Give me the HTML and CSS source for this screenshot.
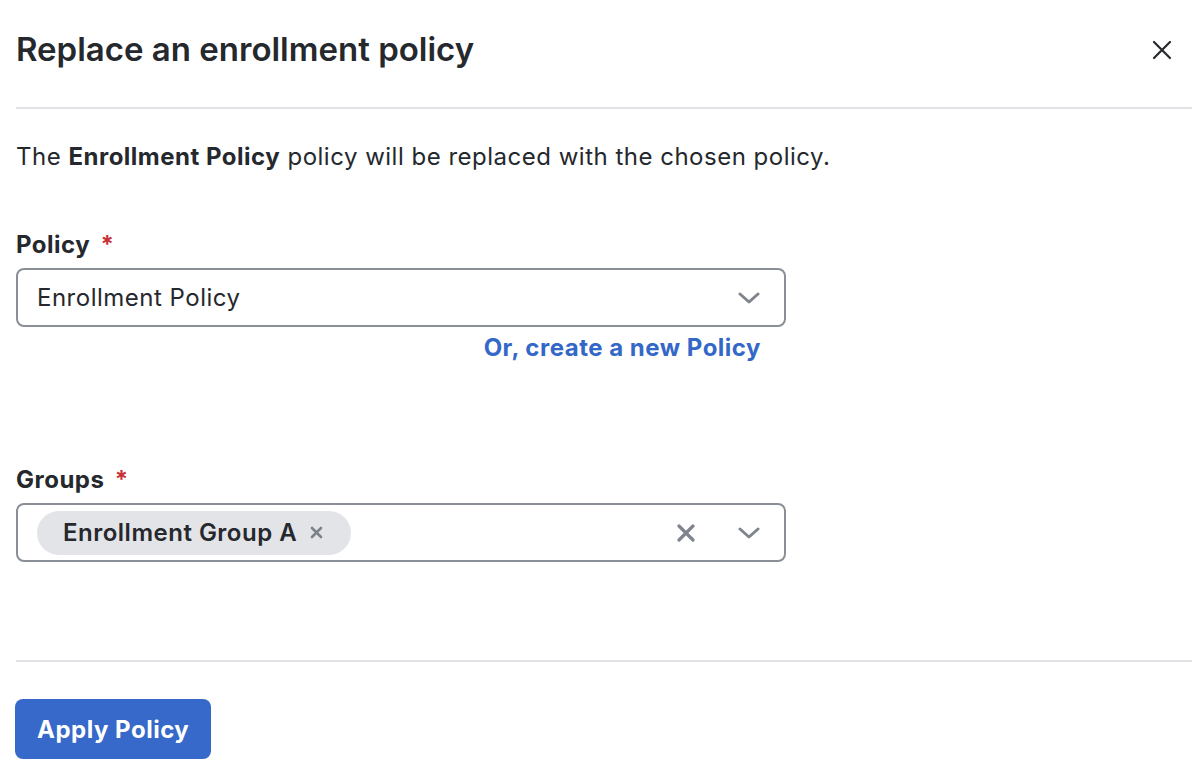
FILE: index.html
```html
<!DOCTYPE html>
<html>
<head>
<meta charset="utf-8">
<link rel="stylesheet" href="styles.css">
</head>
<body>
<div class="dialog">
  <header class="head">
    <h1 class="title">Replace an enrollment policy</h1>
    <button class="close" aria-label="Close">
      <svg width="20" height="20" viewBox="0 0 20 20"><path d="M2 2 L18 18 M18 2 L2 18" stroke="#25282d" stroke-width="2.2" stroke-linecap="round" fill="none"/></svg>
    </button>
  </header>
  <div class="body">
    <p class="intro">The <b>Enrollment Policy</b> policy will be replaced with the chosen policy.</p>
    <div class="field">
      <label class="label">Policy <span class="req">*</span></label>
      <div class="select">
        <span class="value">Enrollment Policy</span>
        <svg class="chev" width="22" height="12" viewBox="0 0 22 12"><path d="M2 2 L11 10 L20 2" stroke="#80858d" stroke-width="3" stroke-linecap="round" stroke-linejoin="round" fill="none"/></svg>
      </div>
      <div class="linkrow"><a class="link">Or, create a new Policy</a></div>
    </div>
    <div class="field groups">
      <label class="label">Groups <span class="req">*</span></label>
      <div class="select multi">
        <span class="chip">Enrollment Group A <svg class="chipx" width="13" height="13" viewBox="0 0 13 13"><path d="M2 2 L11 11 M11 2 L2 11" stroke="#7d8189" stroke-width="2.6" stroke-linecap="round" fill="none"/></svg></span>
        <span class="spacer"></span>
        <svg class="clear" width="18" height="18" viewBox="0 0 18 18"><path d="M2 2 L16 16 M16 2 L2 16" stroke="#80858d" stroke-width="3.2" stroke-linecap="round" fill="none"/></svg>
        <svg class="chev" width="22" height="12" viewBox="0 0 22 12"><path d="M2 2 L11 10 L20 2" stroke="#80858d" stroke-width="3" stroke-linecap="round" stroke-linejoin="round" fill="none"/></svg>
      </div>
    </div>
  </div>
  <footer class="foot">
    <button class="apply">Apply Policy</button>
  </footer>
</div>
</body>
</html>
```
FILE: styles.css
```css
* { box-sizing: border-box; }
html, body { margin: 0; padding: 0; background: #fff; }
body {
  font-family: Inter, "Noto Sans", "Liberation Sans", sans-serif;
  color: #25282d;
  letter-spacing: 0.5px;
}
.dialog {
  width: 1176px;
  margin-left: 16px;
}
.head {
  height: 109px;
  border-bottom: 2px solid #e2e2e6;
  display: flex;
  align-items: flex-start;
  justify-content: space-between;
}
.title {
  margin: 0;
  padding-top: 29px;
  font-size: 33px;
  line-height: 40px;
  font-weight: 600;
  letter-spacing: 0;
}
.close {
  border: 0;
  background: none;
  padding: 0;
  margin-top: 40px;
  margin-right: 20px;
  width: 20px;
  height: 20px;
  display: flex;
}
.body {
  padding-top: 34px;
  height: 553px;
  border-bottom: 2px solid #e2e2e6;
}
.intro {
  margin: 0;
  font-size: 24px;
  line-height: 28px;
}
.intro b { font-weight: 700; }
.field {
  width: 770px;
  margin-top: 60px;
}
.label {
  display: block;
  font-size: 24px;
  line-height: 28px;
  font-weight: 700;
  margin-bottom: 9px;
}
.req { color: #c8333a; margin-left: 4px; }
.select {
  height: 59px;
  border: 2px solid #8a8f97;
  border-radius: 8px;
  display: flex;
  align-items: center;
  padding: 0 24px 0 19px;
}
.value {
  font-size: 24px;
  flex: 1;
}
.linkrow {
  display: flex;
  justify-content: flex-end;
  padding-right: 25px;
  margin-top: 7px;
}
.link {
  color: #3468c8;
  font-weight: 700;
  font-size: 24px;
  line-height: 28px;
}
.groups { margin-top: 104px; }
.multi { padding-left: 19px; }
.chip {
  display: inline-flex;
  align-items: center;
  background: #e3e4e8;
  border-radius: 22px;
  height: 44px;
  padding: 0 28px 0 26px;
  font-size: 24px;
  font-weight: 600;
  gap: 13px;
}
.spacer { flex: 1; }
.clear { margin-right: 43px; }
.foot { padding-top: 37px; }
.apply {
  background: #3669c9;
  color: #fff;
  border: 0;
  border-radius: 8px;
  height: 60px;
  padding: 0 22px;
  font-family: inherit;
  font-size: 24px;
  font-weight: 700;
  letter-spacing: 0.5px;
  margin-left: -1px;
}
```
